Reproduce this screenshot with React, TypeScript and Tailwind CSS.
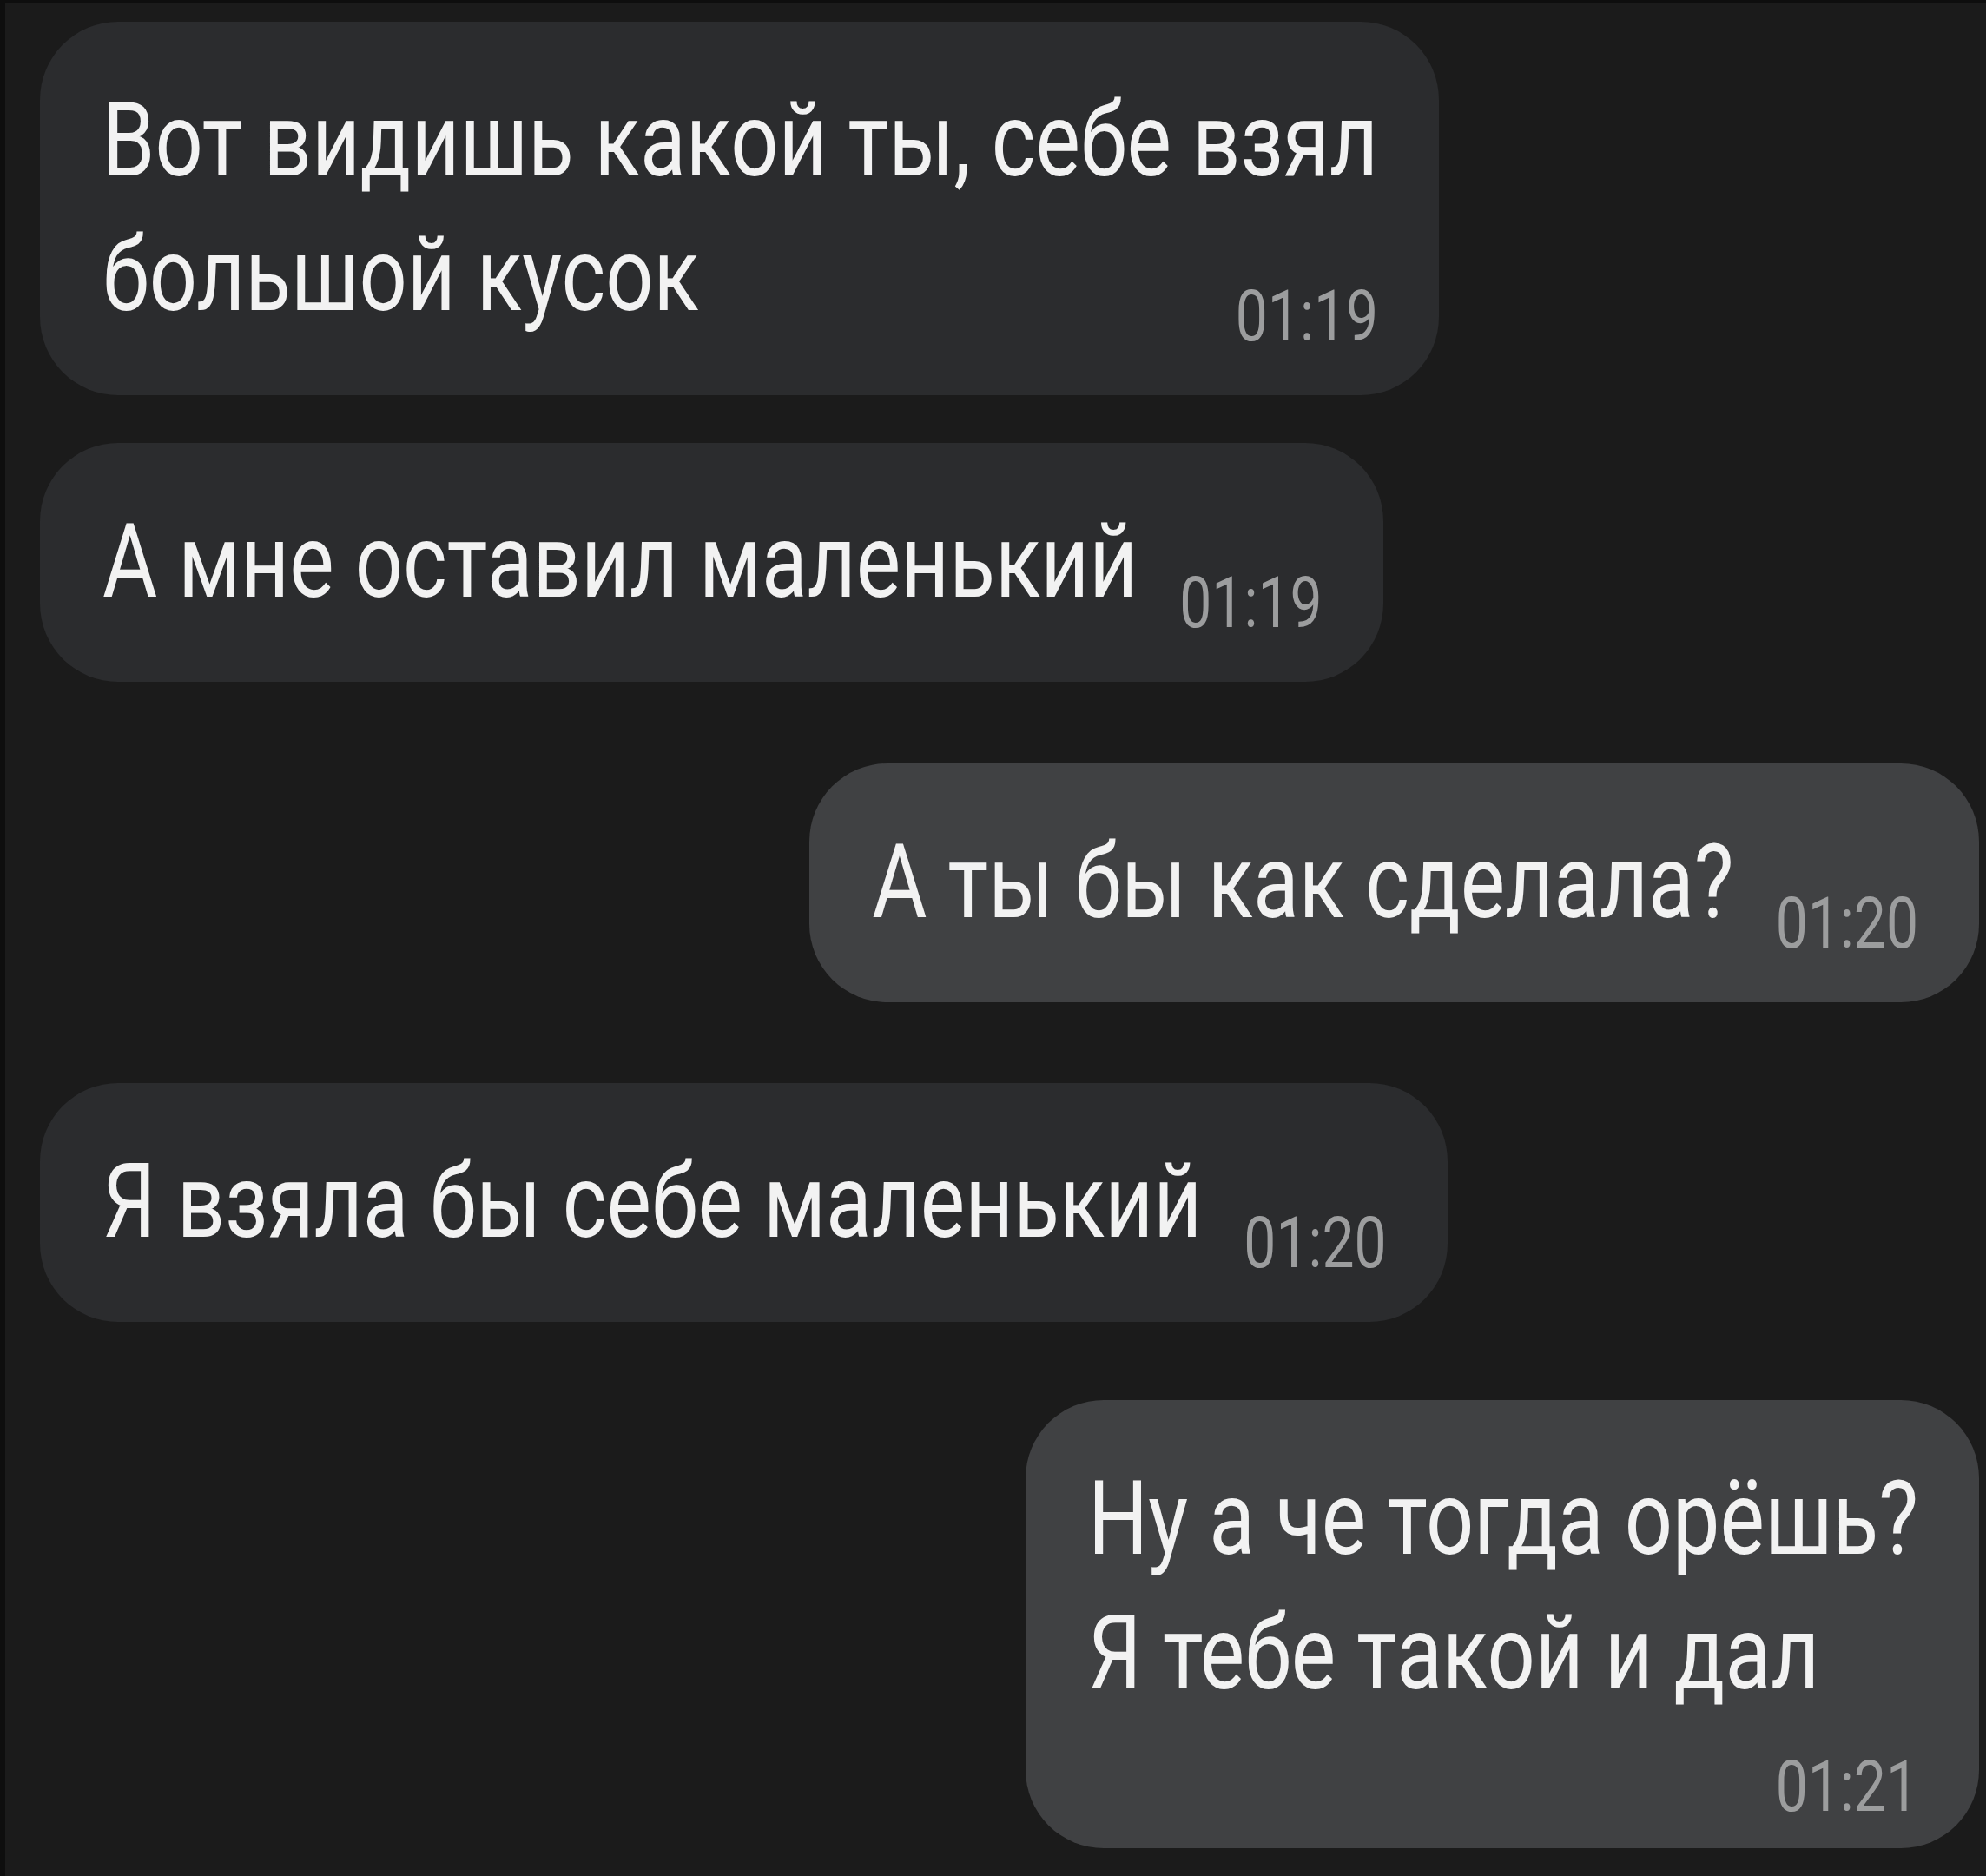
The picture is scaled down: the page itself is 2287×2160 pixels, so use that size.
import React from "react";

type Msg = {
  lines: string[];
  time: string;
  side: "in" | "out";
  timeOwnRow?: boolean;
};

function Line({ children }: { children: React.ReactNode }) {
  return (
    <div className="whitespace-nowrap text-[97px] leading-[155px] text-[#f2f2f2] scale-y-[1.23]">
      {children}
    </div>
  );
}

function Time({ children }: { children: React.ReactNode }) {
  return (
    <div className="whitespace-nowrap text-[66px] leading-[66px] text-[#9c9d9e] scale-y-[1.23] mb-[-3px]">
      {children}
    </div>
  );
}

function Bubble({ lines, time, side, timeOwnRow }: Msg) {
  const bg = side === "in" ? "bg-[#2b2c2e]" : "bg-[#404143]";
  const last = lines[lines.length - 1];
  const rest = lines.slice(0, -1);
  return (
    <div className={`${bg} rounded-[90px] pl-[72px] pr-[70px] pt-[60px] pb-[60px] flex flex-col`}>
      {rest.map((l, i) => (
        <Line key={i}>{l}</Line>
      ))}
      {timeOwnRow ? (
        <>
          <Line>{last}</Line>
          <div className="flex justify-end mt-[43px] mb-[-20px]">
            <Time>{time}</Time>
          </div>
        </>
      ) : (
        <div className="flex items-end gap-[48px]">
          <Line>{last}</Line>
          <div className="ml-auto">
            <Time>{time}</Time>
          </div>
        </div>
      )}
    </div>
  );
}

export default function App() {
  return (
    <div className="w-[2287px] h-[2160px] bg-[#1b1b1b] [font-family:Roboto,sans-serif] overflow-hidden border-l-[6px] border-l-[#0e0e0e] border-t-[3px] border-t-[#0e0e0e]">
      <div className="flex flex-col pl-[40px] pr-[8px] pt-[22px]">
        <div className="self-start">
          <Bubble
            side="in"
            lines={["Вот видишь какой ты, себе взял", "большой кусок"]}
            time="01:19"
          />
        </div>
        <div className="self-start mt-[55px]">
          <Bubble side="in" lines={["А мне оставил маленький"]} time="01:19" />
        </div>
        <div className="self-end mt-[94px]">
          <Bubble side="out" lines={["А ты бы как сделала?"]} time="01:20" />
        </div>
        <div className="self-start mt-[93px]">
          <Bubble side="in" lines={["Я взяла бы себе маленький"]} time="01:20" />
        </div>
        <div className="self-end mt-[90px]">
          <Bubble
            side="out"
            lines={["Ну а че тогда орёшь?", "Я тебе такой и дал"]}
            time="01:21"
            timeOwnRow
          />
        </div>
      </div>
    </div>
  );
}
